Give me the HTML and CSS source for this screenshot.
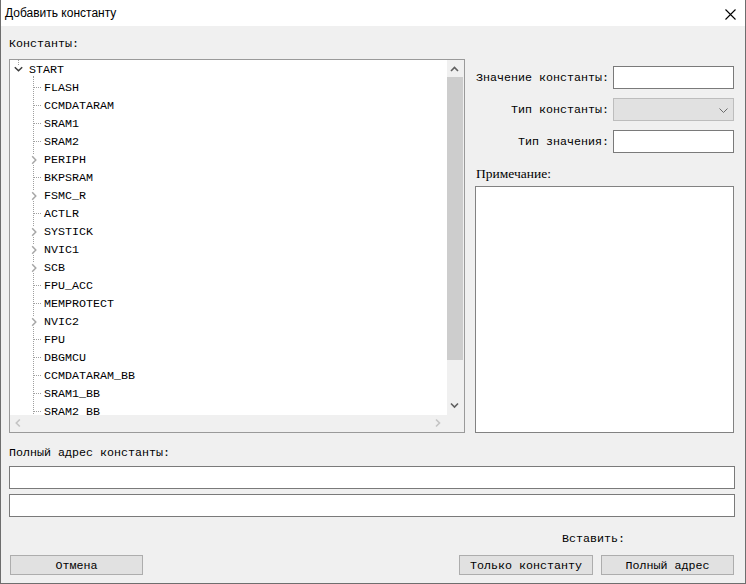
FILE: index.html
```html
<!DOCTYPE html>
<html lang="ru">
<head>
<meta charset="utf-8">
<title>Добавить константу</title>
<link rel="stylesheet" href="styles.css">
</head>
<body>
<div class="window">
  <div class="titlebar">
    <span class="title">Добавить константу</span>
    <svg class="close" width="11" height="11" viewBox="0 0 11 11"><path d="M0.5 0.5 L10.5 10.5 M10.5 0.5 L0.5 10.5" stroke="#000" stroke-width="1.1" fill="none"/></svg>
  </div>
  <div class="content">
    <div class="main">
      <div class="left">
        <div class="label">Константы:</div>
        <div class="tree">
          <div class="tree-view">
            <div class="row root">
              <svg class="root-exp" width="15" height="18" viewBox="0 0 15 18"><path d="M4.5 0 V1 M4.5 2 V3 M4.5 4 V5" stroke="#a0a0a0" stroke-width="1"/><path d="M0.8 7.2 L4.5 10.8 L8.2 7.2" stroke="#3c3c3c" stroke-width="1.5" fill="none"/></svg>
              <span class="root-text">START</span>
            </div>
            <div class="children">
              <div class="row">FLASH</div>
              <div class="row">CCMDATARAM</div>
              <div class="row">SRAM1</div>
              <div class="row">SRAM2</div>
              <div class="row exp">PERIPH</div>
              <div class="row">BKPSRAM</div>
              <div class="row exp">FSMC_R</div>
              <div class="row">ACTLR</div>
              <div class="row exp">SYSTICK</div>
              <div class="row exp">NVIC1</div>
              <div class="row exp">SCB</div>
              <div class="row">FPU_ACC</div>
              <div class="row">MEMPROTECT</div>
              <div class="row exp">NVIC2</div>
              <div class="row">FPU</div>
              <div class="row">DBGMCU</div>
              <div class="row">CCMDATARAM_BB</div>
              <div class="row">SRAM1_BB</div>
              <div class="row">SRAM2_BB</div>
            </div>
          </div>
          <div class="vscroll">
            <svg class="sb-btn" width="17" height="17" viewBox="0 0 17 17"><path d="M4 11 L7.5 7.5 L11 11" stroke="#606060" stroke-width="1.6" fill="none"/></svg>
            <div class="sb-track"><div class="sb-thumb"></div></div>
            <svg class="sb-btn" width="17" height="17" viewBox="0 0 17 17"><path d="M4 5.5 L7.5 9 L11 5.5" stroke="#606060" stroke-width="1.6" fill="none"/></svg>
          </div>
          <div class="hscroll">
            <svg class="sb-btn" width="17" height="17" viewBox="0 0 17 17"><path d="M9.8 4.5 L6.3 8 L9.8 11.5" stroke="#c4c4c4" stroke-width="1.6" fill="none"/></svg>
            <svg class="sb-btn" width="17" height="17" viewBox="0 0 17 17"><path d="M6 4.5 L9.5 8 L6 11.5" stroke="#c4c4c4" stroke-width="1.6" fill="none"/></svg>
          </div>
          <div class="corner"></div>
        </div>
      </div>
      <div class="right">
        <div class="fields">
          <div class="flabel">Значение константы:</div>
          <div class="input"></div>
          <div class="flabel">Тип константы:</div>
          <div class="combo"><svg width="9" height="5" viewBox="0 0 9 5"><path d="M0.5 0.5 L4.5 4.5 L8.5 0.5" stroke="#6a6a6a" stroke-width="1" fill="none"/></svg></div>
          <div class="flabel">Тип значения:</div>
          <div class="input"></div>
        </div>
        <div class="label note-label">Примечание:</div>
        <div class="textarea"></div>
      </div>
    </div>
    <div class="label addr-label">Полный адрес константы:</div>
    <div class="input wide first"></div>
    <div class="input wide second"></div>
    <div class="bottom">
      <div class="btn cancel">Отмена</div>
      <div class="insert-group">
        <div class="insert-label">Вставить:</div>
        <div class="btn-row">
          <div class="btn only">Только константу</div>
          <div class="btn full">Полный адрес</div>
        </div>
      </div>
    </div>
  </div>
</div>
</body>
</html>
```

FILE: styles.css
```css
* { box-sizing: border-box; }
html, body { margin: 0; padding: 0; }
body {
  width: 746px;
  height: 584px;
  overflow: hidden;
  background: #f0f0f0;
  font-family: "Liberation Mono", "DejaVu Sans Mono", monospace;
  font-size: 11.67px;
  color: #000;
}
.window {
  width: 746px;
  height: 584px;
  border: 1px solid #6e6e6e;
  border-top: none;
  background: #f0f0f0;
  display: flex;
  flex-direction: column;
}
.titlebar {
  height: 26px;
  background: #fff;
  display: flex;
  align-items: center;
  justify-content: space-between;
  padding: 0 9px 0 4px;
  flex-shrink: 0;
}
.title {
  font-family: "Liberation Sans", Arial, sans-serif;
  font-size: 12px;
  margin-top: 0;
}
.close { display: block; margin-top: 2px; }
.content {
  padding: 10px 10px 0 8px;
  display: flex;
  flex-direction: column;
}
.label { height: 16px; line-height: 16px; white-space: pre; }
.main { display: flex; gap: 10px; }
.left { width: 456px; display: flex; flex-direction: column; }
.left .label { margin-bottom: 7px; }
.tree {
  height: 374px;
  border: 1px solid #9a9a9a;
  background: #fff;
  display: grid;
  grid-template-columns: 1fr 17px;
  grid-template-rows: 1fr 17px;
  overflow: hidden;
}
.tree-view {
  overflow: hidden;
  padding-left: 4px;
}
.row {
  height: 18px;
  padding-top: 2px;
  line-height: 16px;
  white-space: pre;
  position: relative;
}
.row.root { display: flex; align-items: flex-start; padding-top: 0; }
.root-text { line-height: 16px; margin-top: 2px; }
.root-exp { display: block; flex-shrink: 0; }
.children {
  margin-left: 19px;
  border-left: 1px dotted #a0a0a0;
  margin-top: -2px;
  padding-top: 2px;
}
.children .row { padding-left: 10px; }
.children .row::before {
  content: "";
  position: absolute;
  left: 0;
  top: 9px;
  width: 7px;
  border-top: 1px dotted #a0a0a0;
}
.children .row.exp::before {
  border: none;
  width: 6px;
  height: 10px;
  left: -3px;
  top: 5px;
  background: #fff url("data:image/svg+xml,%3Csvg xmlns='http://www.w3.org/2000/svg' width='6' height='10' viewBox='0 0 6 10'%3E%3Cpath d='M1.2 1.2 L4.8 5 L1.2 8.8' stroke='%23a6a6a6' stroke-width='1.5' fill='none'/%3E%3C/svg%3E") no-repeat;
}
.vscroll {
  background: #f0f0f0;
  display: flex;
  flex-direction: column;
}
.sb-btn { display: block; flex-shrink: 0; }
.sb-track { flex: 1; display: flex; flex-direction: column; }
.sb-thumb {
  height: 283px;
  margin-right: 1px;
  background: #cdcdcd;
}
.hscroll {
  background: #f0f0f0;
  display: flex;
  justify-content: space-between;
}
.corner { background: #f0f0f0; }
.right {
  width: 259px;
  padding-top: 30px;
  display: flex;
  flex-direction: column;
}
.fields {
  display: grid;
  grid-template-columns: 1fr 121px;
  grid-auto-rows: 23px;
  row-gap: 9px;
  column-gap: 4px;
}
.flabel {
  text-align: right;
  line-height: 25px;
  white-space: pre;
}
.input {
  height: 23px;
  background: #fff;
  border: 1px solid #7a7a7a;
}
.combo {
  height: 23px;
  background: #e1e1e1;
  border: 1px solid #bdbdbd;
  display: flex;
  align-items: center;
  justify-content: flex-end;
  padding-right: 5px;
}
.combo svg { display: block; margin-top: 1px; }
.note-label {
  margin-top: 13px;
  margin-bottom: 4px;
  font-family: "Liberation Serif", "Times New Roman", serif;
  font-size: 13.5px;
  padding-left: 1px;
}
.textarea {
  height: 247px;
  background: #fff;
  border: 1px solid #828282;
}
.addr-label { margin-top: 12px; }
.input.wide.first { margin-top: 5px; }
.input.wide.second { margin-top: 5px; }
.bottom {
  display: flex;
  justify-content: space-between;
  align-items: flex-end;
  margin-top: 14px;
  padding: 0 1px 0 1px;
}
.btn {
  height: 20px;
  padding-top: 1px;
  line-height: 18px;
  background: #e1e1e1;
  border: 1px solid #adadad;
  text-align: center;
  white-space: pre;
}
.cancel { width: 133px; }
.insert-group { display: flex; flex-direction: column; }
.insert-label {
  height: 16px;
  line-height: 16px;
  text-align: center;
  padding-right: 6px;
  margin-bottom: 8px;
}
.btn-row { display: flex; gap: 8px; }
.only { width: 134px; }
.full { width: 133px; }
```
